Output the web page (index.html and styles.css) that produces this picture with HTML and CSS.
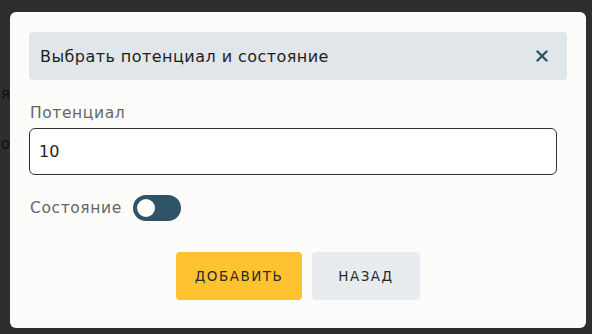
FILE: index.html
```html
<!DOCTYPE html>
<html lang="ru">
<head>
    <meta charset="UTF-8">
    <meta name="viewport" content="width=device-width, initial-scale=1.0">
    <title>Выбрать потенциал и состояние</title>
    <link rel="stylesheet" href="styles.css">
</head>
<body>
    <div class="page">
        <p class="page-line first">Описание я</p>
        <p class="page-line">Дополнительно,</p>
    </div>

    <div class="modal">
        <div class="modal-header">
            <span class="modal-title">Выбрать потенциал и состояние</span>
            <button class="close" aria-label="Закрыть">
                <svg width="12" height="12" viewBox="0 0 12 12">
                    <path d="M1.5 1.5 L10.5 10.5 M10.5 1.5 L1.5 10.5" stroke="#2f5468" stroke-width="2.4" stroke-linecap="round"/>
                </svg>
            </button>
        </div>

        <label class="field-label" for="potential">Потенциал</label>
        <input class="field-input" id="potential" type="text" value="10">

        <div class="state-row">
            <span class="field-label">Состояние</span>
            <div class="toggle"><div class="knob"></div></div>
        </div>

        <div class="actions">
            <button class="btn btn-add">Добавить</button>
            <button class="btn btn-back">Назад</button>
        </div>
    </div>
</body>
</html>
```

FILE: styles.css
```css
* {
    margin: 0;
    padding: 0;
    box-sizing: border-box;
    font-family: 'DejaVu Sans', 'Noto Sans', sans-serif;
}

body {
    background: #2e2e2e;
    width: 592px;
    height: 334px;
    overflow: hidden;
    position: relative;
}

.page {
    width: 10px;
    overflow: hidden;
    white-space: nowrap;
    direction: rtl;
    padding-top: 84px;
}

.page-line {
    color: #111;
    font-size: 15px;
    line-height: 20px;
}

.page-line.first {
    margin-bottom: 30px;
}

.modal {
    position: absolute;
    left: 10px;
    top: 12px;
    width: 576px;
    height: 316px;
    background: #fcfcfb;
    border-radius: 6px;
    padding: 20px 19px;
}

.modal-header {
    display: flex;
    justify-content: space-between;
    align-items: center;
    height: 48px;
    background: #e0e6ea;
    border-radius: 4px;
    padding: 0 19px 0 11px;
}

.modal-title {
    font-size: 16px;
    letter-spacing: 0.45px;
    color: #1e1e1e;
}

.close {
    border: none;
    background: none;
    width: 12px;
    height: 12px;
    display: flex;
    cursor: pointer;
}

.field-label {
    display: block;
    font-size: 15.5px;
    letter-spacing: 0.6px;
    color: #666;
    margin: 23px 0 0 1px;
    line-height: 20px;
}

.field-input {
    display: block;
    width: 528px;
    height: 47px;
    margin-top: 5px;
    border: 1px solid #333;
    border-radius: 6px;
    background: #fff;
    padding: 0 9px;
    font-size: 16px;
    color: #222;
    outline: none;
}

.state-row {
    display: flex;
    align-items: center;
    gap: 11px;
    margin-top: 20px;
}

.state-row .field-label {
    margin: 0 0 0 1px;
}

.toggle {
    width: 48px;
    height: 26px;
    border-radius: 13px;
    background: #2f5468;
    padding: 4px;
}

.knob {
    width: 18px;
    height: 18px;
    border-radius: 50%;
    background: #fff;
}

.actions {
    display: flex;
    justify-content: center;
    gap: 10px;
    margin-top: 31px;
}

.btn {
    height: 48px;
    border: none;
    border-radius: 4px;
    font-size: 13.5px;
    font-weight: 500;
    letter-spacing: 1.5px;
    text-transform: uppercase;
    color: #2a2a2a;
    cursor: pointer;
}

.btn-add {
    width: 126px;
    background: #ffc231;
}

.btn-back {
    width: 108px;
    background: #e8ecee;
}
```
